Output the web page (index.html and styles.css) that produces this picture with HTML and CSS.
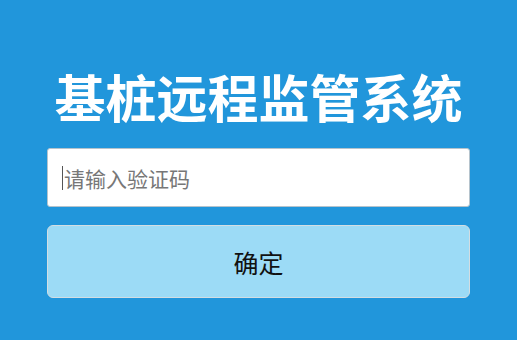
FILE: index.html
```html
<!DOCTYPE html>
<html lang="zh-CN">
<head>
    <meta charset="UTF-8">
    <meta name="viewport" content="width=device-width, initial-scale=1.0">
    <title>基桩远程监管系统</title>
    <link rel="stylesheet" href="styles.css">
</head>
<body>

<div class="login-box">
    <h1 class="title">基桩远程监管系统</h1>
    <div class="code-input">
        <span class="caret"></span>
        <span class="placeholder">请输入验证码</span>
    </div>
    <div class="submit-btn">确定</div>
</div>

</body>
</html>
```

FILE: styles.css
```css
body {
    margin: 0;
    height: 340px;
    background: #2196db;
    font-family: "Noto Sans CJK SC", "Noto Sans", sans-serif;
}
.login-box {
    display: flex;
    flex-direction: column;
    padding: 66px 47px 0 47px;
}
.title {
    margin: 0;
    height: 60px;
    line-height: 60px;
    text-align: center;
    color: #fff;
    font-size: 51px;
    font-weight: bold;
    white-space: nowrap;
}
.code-input {
    margin-top: 22px;
    height: 57px;
    background: #fff;
    border: 1px solid #b5c3cc;
    border-radius: 3px;
    display: flex;
    align-items: center;
    padding-left: 14px;
}
.caret {
    width: 1px;
    height: 24px;
    background: #555;
    margin-right: 1px;
}
.placeholder {
    color: #777;
    font-size: 21px;
}
.submit-btn {
    margin-top: 18px;
    height: 71px;
    background: #9cdbf6;
    border: 1px solid #d3dde2;
    border-radius: 6px;
    display: flex;
    align-items: center;
    justify-content: center;
    font-size: 25px;
    color: #111;
}
```
